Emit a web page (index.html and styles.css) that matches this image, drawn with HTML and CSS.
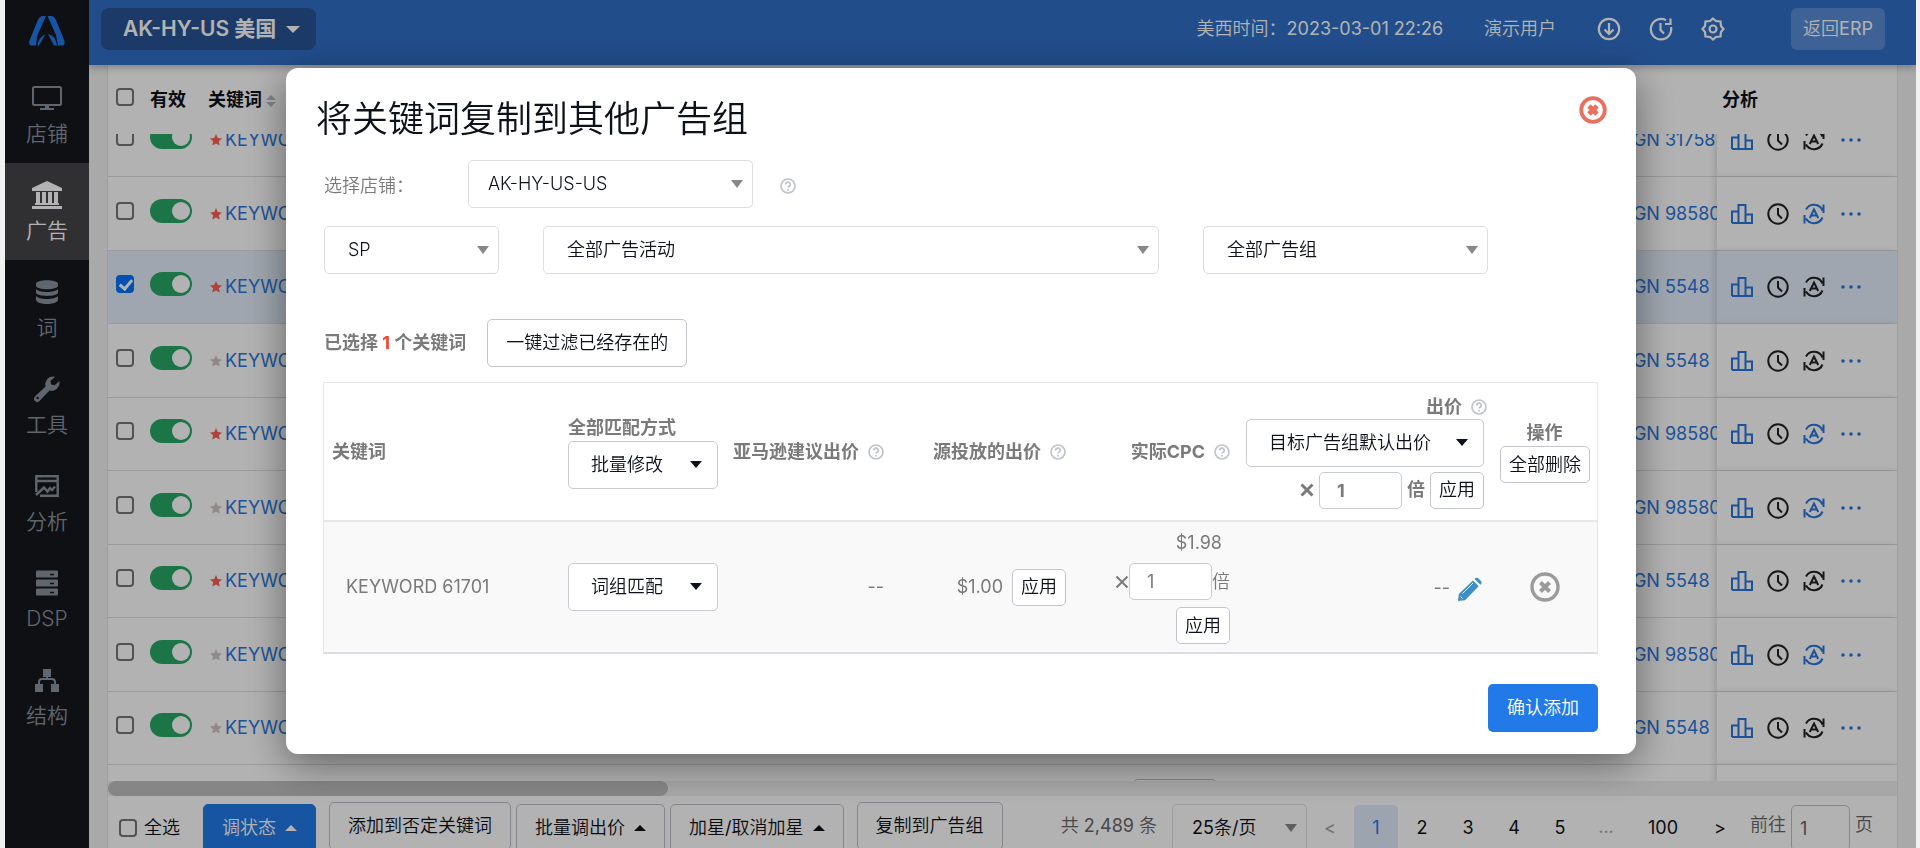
FILE: index.html
```html
<!DOCTYPE html>
<html lang="zh-CN">
<head>
<meta charset="utf-8">
<title>广告 - 关键词</title>
<link rel="stylesheet" href="styles.css">
</head>
<body>
<svg class="sprite" aria-hidden="true">
  <symbol id="i-help" viewBox="0 0 16 16"><circle cx="8" cy="8" r="7" fill="none" stroke="currentColor" stroke-width="1.7"/><path d="M5.8 6.4a2.2 2.2 0 1 1 3.1 2c-.6.3-.9.6-.9 1.2" fill="none" stroke="currentColor" stroke-width="1.7"/><circle cx="8" cy="11.7" r="1" fill="currentColor"/></symbol>
  <symbol id="i-star" viewBox="0 0 12 12"><path d="M6 0l1.8 3.9 4.2.5-3.1 2.9.8 4.2L6 9.4l-3.7 2.1.8-4.2L0 4.4l4.2-.5z" fill="currentColor"/></symbol>
  <symbol id="i-bars" viewBox="0 0 22 20"><path d="M1 19V7.500h6.500V19M7.500 19V1h7v18M14.500 10.500H21V19H1" fill="none" stroke="currentColor" stroke-width="2"/></symbol>
  <symbol id="i-clock" viewBox="0 0 22 22"><circle cx="11" cy="11" r="9.700" fill="none" stroke="currentColor" stroke-width="2"/><path d="M11 5v6.500l4 4" fill="none" stroke="currentColor" stroke-width="2"/></symbol>
  <symbol id="i-auto" viewBox="0 0 22 22"><path d="M3 6.500A9.200 9.200 0 0 1 19.500 7.500M20.500 1.500V10M19.500 14.500A9.200 9.200 0 0 1 3 15.500M1.500 20.500V12M6.800 15L11 6.500l4.200 8.500M8.500 12.500h5" fill="none" stroke="currentColor" stroke-width="2"/></symbol>
  <symbol id="i-more" viewBox="0 0 20 4"><circle cx="2" cy="2" r="1.800" fill="currentColor"/><circle cx="10" cy="2" r="1.800" fill="currentColor"/><circle cx="18" cy="2" r="1.800" fill="currentColor"/></symbol>
</svg>

<div class="app">
  <nav class="side">
    <a class="logo" href="#" aria-label="首页"><svg width="36" height="32" viewBox="0 0 36 32"><path d="M13 1h4L8.500 20 7 30.500H2Q-.5 30 .3 26L8.500 6q1.500-4 4.500-5zM18.500 1H23q3 1 4 4l8.500 21q.5 4-1.500 4.500h-5L27 20z" fill="#217ae8"/><path d="M8.500 30.500q1-8 8-11.500l-6.500 11.500zM19 19q8 2 9 11.500h-3z" fill="#217ae8"/></svg></a>
    <a class="nav" href="#"><svg width="30" height="24" viewBox="0 0 30 24"><rect x="1" y="1" width="28" height="18" rx="1.500" fill="none" stroke="currentColor" stroke-width="2"/><path d="M13 19h4v3h5v2H8v-2h5z" fill="currentColor"/></svg><span>店铺</span></a>
    <a class="nav nav--on" href="#"><svg width="30" height="28" viewBox="0 0 30 28"><path d="M15 0l15 7v3H0V7zM4 11h4v11H4zM10 11h4v11h-4zM16 11h4v11h-4zM22 11h4v11h-4zM3 22h24v2H3zM0 25h30v3H0z" fill="currentColor"/></svg><span>广告</span></a>
    <a class="nav" href="#"><svg width="22" height="24" viewBox="0 0 22 24"><path d="M0 4c0-5 22-5 22 0v1.500c0 5-22 5-22 0zM0 9c3 4 19 4 22 0v3.500c0 4.500-22 4.500-22 0zM0 16c3 4 19 4 22 0v3.500c0 6-22 6-22 0z" fill="currentColor"/></svg><span>词</span></a>
    <a class="nav" href="#"><svg width="26" height="26" viewBox="0 0 26 26"><path d="M21 .7a8 8 0 0 0-9.500 9.800L1 20.500a2.800 2.800 0 0 0 4.500 4.500L15.500 14.500A8 8 0 0 0 25.300 5l-4.500 4.300-3.600-.7-.8-3.700z" fill="currentColor"/><circle cx="3.700" cy="22" r="1.200" fill="#15181e"/></svg><span>工具</span></a>
    <a class="nav" href="#"><svg width="24" height="22" viewBox="0 0 24 22"><path d="M1.300 17V1.200h21.400v19.600H5M1 6h22" fill="none" stroke="currentColor" stroke-width="2.400"/><path d="M1 20l8-7.500 3.500 4L15 13l2 2 3-3.500" fill="none" stroke="currentColor" stroke-width="2.400"/><path d="M3 3.300h2M7 3.300h12" stroke="#15181e"/></svg><span>分析</span></a>
    <a class="nav" href="#"><svg width="22" height="25" viewBox="0 0 22 25"><rect width="22" height="7" rx="1" fill="currentColor"/><rect y="9" width="22" height="7" rx="1" fill="currentColor"/><rect y="18" width="22" height="7" rx="1" fill="currentColor"/><path d="M14 4h4M14 13h4M14 22h4" stroke="#15181e" stroke-width="1.500"/></svg><span>DSP</span></a>
    <a class="nav" href="#"><svg width="24" height="24" viewBox="0 0 24 24"><path d="M8 1h8v8h-8zM0 16h8v8H0zM16 16h8v8h-8z" fill="currentColor"/><path d="M12 8v4M4 17v-3q0-3 3-3h10q3 0 3 3v3" fill="none" stroke="currentColor" stroke-width="2"/></svg><span>结构</span></a>
  </nav>

  <div class="page">
    <header class="top">
      <button class="store" type="button">AK-HY-US 美国<i class="tri tri--down"></i></button>
      <span class="time">美西时间：2023-03-01 22:26</span>
      <a class="user" href="#">演示用户</a>
      <button class="ico" type="button" aria-label="下载"><svg width="24" height="24" viewBox="0 0 24 24" fill="none" stroke="currentColor" stroke-width="2.200"><circle cx="12" cy="12" r="10.200"/><path d="M12 6v10.500M7.500 12.500l4.500 4.500 4.500-4.500"/></svg></button>
      <button class="ico" type="button" aria-label="历史"><svg width="24" height="24" viewBox="0 0 24 24" fill="none" stroke="currentColor" stroke-width="2.200"><path d="M17 3.300A10.200 10.200 0 1 0 22 10M21.500 1.500V7H16M11.500 6v7l3.500 3.500"/></svg></button>
      <button class="ico" type="button" aria-label="设置"><svg width="24" height="24" viewBox="0 0 24 24" fill="none" stroke="currentColor" stroke-width="2.200"><path d="M12 1.500l3 2.500 4.500.5.500 4.500 2.500 3-2.500 3-.5 4.500-4.500.5-3 2.500-3-2.500-4.500-.5L4 15l-2.500-3L4 9l.5-4.500L9 4z"/><circle cx="12" cy="12" r="3.500"/></svg></button>
      <button class="erp" type="button">返回ERP</button>
    </header>

    <main class="list">
      <table class="grid grid--head">
        <colgroup><col class="w-check"><col class="w-on"><col class="w-key"><col><col class="w-bid"><col class="w-gap"><col class="w-camp"><col class="w-act"></colgroup>
        <tr><th class="up"><input type="checkbox" aria-label="选择本页"></th><th>有效</th><th>关键词<span class="sort"><i class="tri"></i><i class="tri tri--down"></i></span></th><th></th><th></th><th></th><th></th><th class="ana">分析</th></tr>
      </table>
      <div class="scroll">
      <table class="grid grid--body">
        <colgroup><col class="w-check"><col class="w-on"><col class="w-key"><col><col class="w-bid"><col class="w-gap"><col class="w-camp"><col class="w-act"></colgroup>
        <tr><td class="up"><input type="checkbox" aria-label="选择"></td><td class="up"><input class="switch" type="checkbox" checked aria-label="有效"></td><td class="key"><svg class="star star--on"><use href="#i-star"/></svg><a href="#">KEYWORD 31758</a></td><td></td><td></td><td></td><td><a href="#">CAMPAIGN 31758</a></td><td class="act"><div><svg class="bars"><use href="#i-bars"/></svg><svg class="rnd"><use href="#i-clock"/></svg><svg class="rnd"><use href="#i-auto"/></svg><svg class="more"><use href="#i-more"/></svg></div></td></tr>
        <tr><td class="up"><input type="checkbox" aria-label="选择"></td><td class="up"><input class="switch" type="checkbox" checked aria-label="有效"></td><td class="key"><svg class="star star--on"><use href="#i-star"/></svg><a href="#">KEYWORD 98580</a></td><td></td><td></td><td></td><td><a href="#">CAMPAIGN 98580</a></td><td class="act"><div><svg class="bars"><use href="#i-bars"/></svg><svg class="rnd"><use href="#i-clock"/></svg><svg class="rnd rnd--on"><use href="#i-auto"/></svg><svg class="more"><use href="#i-more"/></svg></div></td></tr>
        <tr class="sel"><td class="up"><input type="checkbox" checked aria-label="选择"></td><td class="up"><input class="switch" type="checkbox" checked aria-label="有效"></td><td class="key"><svg class="star star--on"><use href="#i-star"/></svg><a href="#">KEYWORD 61701</a></td><td></td><td></td><td></td><td><a href="#">CAMPAIGN 5548</a></td><td class="act"><div><svg class="bars"><use href="#i-bars"/></svg><svg class="rnd"><use href="#i-clock"/></svg><svg class="rnd"><use href="#i-auto"/></svg><svg class="more"><use href="#i-more"/></svg></div></td></tr>
        <tr><td class="up"><input type="checkbox" aria-label="选择"></td><td class="up"><input class="switch" type="checkbox" checked aria-label="有效"></td><td class="key"><svg class="star"><use href="#i-star"/></svg><a href="#">KEYWORD 5548</a></td><td></td><td></td><td></td><td><a href="#">CAMPAIGN 5548</a></td><td class="act"><div><svg class="bars"><use href="#i-bars"/></svg><svg class="rnd"><use href="#i-clock"/></svg><svg class="rnd"><use href="#i-auto"/></svg><svg class="more"><use href="#i-more"/></svg></div></td></tr>
        <tr><td class="up"><input type="checkbox" aria-label="选择"></td><td class="up"><input class="switch" type="checkbox" checked aria-label="有效"></td><td class="key"><svg class="star star--on"><use href="#i-star"/></svg><a href="#">KEYWORD 98580</a></td><td></td><td></td><td></td><td><a href="#">CAMPAIGN 98580</a></td><td class="act"><div><svg class="bars"><use href="#i-bars"/></svg><svg class="rnd"><use href="#i-clock"/></svg><svg class="rnd rnd--on"><use href="#i-auto"/></svg><svg class="more"><use href="#i-more"/></svg></div></td></tr>
        <tr><td class="up"><input type="checkbox" aria-label="选择"></td><td class="up"><input class="switch" type="checkbox" checked aria-label="有效"></td><td class="key"><svg class="star"><use href="#i-star"/></svg><a href="#">KEYWORD 98580</a></td><td></td><td></td><td></td><td><a href="#">CAMPAIGN 98580</a></td><td class="act"><div><svg class="bars"><use href="#i-bars"/></svg><svg class="rnd"><use href="#i-clock"/></svg><svg class="rnd rnd--on"><use href="#i-auto"/></svg><svg class="more"><use href="#i-more"/></svg></div></td></tr>
        <tr><td class="up"><input type="checkbox" aria-label="选择"></td><td class="up"><input class="switch" type="checkbox" checked aria-label="有效"></td><td class="key"><svg class="star star--on"><use href="#i-star"/></svg><a href="#">KEYWORD 5548</a></td><td></td><td></td><td></td><td><a href="#">CAMPAIGN 5548</a></td><td class="act"><div><svg class="bars"><use href="#i-bars"/></svg><svg class="rnd"><use href="#i-clock"/></svg><svg class="rnd"><use href="#i-auto"/></svg><svg class="more"><use href="#i-more"/></svg></div></td></tr>
        <tr><td class="up"><input type="checkbox" aria-label="选择"></td><td class="up"><input class="switch" type="checkbox" checked aria-label="有效"></td><td class="key"><svg class="star"><use href="#i-star"/></svg><a href="#">KEYWORD 98580</a></td><td></td><td></td><td></td><td><a href="#">CAMPAIGN 98580</a></td><td class="act"><div><svg class="bars"><use href="#i-bars"/></svg><svg class="rnd"><use href="#i-clock"/></svg><svg class="rnd rnd--on"><use href="#i-auto"/></svg><svg class="more"><use href="#i-more"/></svg></div></td></tr>
        <tr><td class="up"><input type="checkbox" aria-label="选择"></td><td class="up"><input class="switch" type="checkbox" checked aria-label="有效"></td><td class="key"><svg class="star"><use href="#i-star"/></svg><a href="#">KEYWORD 5548</a></td><td></td><td></td><td></td><td><a href="#">CAMPAIGN 5548</a></td><td class="act"><div><svg class="bars"><use href="#i-bars"/></svg><svg class="rnd"><use href="#i-clock"/></svg><svg class="rnd"><use href="#i-auto"/></svg><svg class="more"><use href="#i-more"/></svg></div></td></tr>
        <tr><td></td><td></td><td></td><td></td><td><input class="bid" type="text" aria-label="出价"></td><td></td><td></td><td class="act"></td></tr>
      </table>
      </div>
      <div class="hbar"><div class="hbar-thumb"></div></div>
      <footer class="foot">
        <label class="all"><input type="checkbox">全选</label>
        <button class="tool tool--menu tool--blue" type="button">调状态<i class="tri"></i></button>
        <button class="tool" type="button">添加到否定关键词</button>
        <button class="tool tool--menu" type="button">批量调出价<i class="tri"></i></button>
        <button class="tool tool--menu" type="button">加星/取消加星<i class="tri"></i></button>
        <button class="tool tool--copy" type="button">复制到广告组</button>
        <span class="total">共 2,489 条</span>
        <span class="pick pick--size"><select aria-label="每页条数"><option>25条/页</option></select></span>
        <button class="pg pg--off" type="button">&lt;</button>
        <button class="pg pg--on" type="button">1</button>
        <button class="pg" type="button">2</button>
        <button class="pg" type="button">3</button>
        <button class="pg" type="button">4</button>
        <button class="pg" type="button">5</button>
        <span class="pg pg--off">...</span>
        <button class="pg pg--wide" type="button">100</button>
        <button class="pg" type="button">&gt;</button>
        <label class="jump">前往<input type="text" value="1">页</label>
      </footer>
    </main>
  </div>
</div>

<div class="mask">
  <section class="modal" role="dialog" aria-labelledby="dlg-title">
    <div class="modal-head">
      <h1 id="dlg-title">将关键词复制到其他广告组</h1>
      <button class="close" type="button" aria-label="关闭"><svg width="28" height="28" viewBox="0 0 28 28"><circle cx="14" cy="14" r="11.800" fill="none" stroke="#e8705f" stroke-width="3.800"/><path d="M10 10l8 8M18 10l-8 8" stroke="#e8705f" stroke-width="5"/></svg></button>
    </div>
    <div class="modal-body">
      <div class="line">
        <label class="lbl" for="shop">选择店铺：</label>
        <span class="pick pick--shop"><select id="shop"><option>AK-HY-US-US</option></select></span>
        <svg class="help"><use href="#i-help"/></svg>
      </div>
      <div class="line line--filters">
        <span class="pick pick--type"><select aria-label="广告类型"><option>SP</option></select></span>
        <span class="pick pick--camp"><select aria-label="广告活动"><option>全部广告活动</option></select></span>
        <span class="pick pick--group"><select aria-label="广告组"><option>全部广告组</option></select></span>
      </div>
      <div class="line line--count">
        <strong>已选择 <em>1</em> 个关键词</strong>
        <button class="btn btn--lg" type="button">一键过滤已经存在的</button>
      </div>
      <table class="kw">
        <colgroup><col class="k1"><col class="k2"><col class="k3"><col class="k4"><col class="k5"><col class="k6"><col class="k7"></colgroup>
        <thead>
          <tr>
            <th>关键词</th>
            <th>全部匹配方式<span class="pick pick--dark pick--match"><select aria-label="全部匹配方式"><option>批量修改</option></select></span></th>
            <th class="r"><span class="q">亚马逊建议出价<svg class="help"><use href="#i-help"/></svg></span></th>
            <th class="r"><span class="q">源投放的出价<svg class="help"><use href="#i-help"/></svg></span></th>
            <th class="r"><span class="q">实际CPC<svg class="help"><use href="#i-help"/></svg></span></th>
            <th class="r"><div class="q q--bid">出价<svg class="help"><use href="#i-help"/></svg></div>
              <div class="pick pick--dark pick--bid"><select aria-label="出价"><option>目标广告组默认出价</option></select></div>
              <div class="mult mult--gap"><svg class="x" viewBox="0 0 14 14"><path d="M1.500 1.500l11 11M12.500 1.500l-11 11"/></svg><input type="text" value="1" aria-label="倍数"><span>倍</span><button class="btn" type="button">应用</button></div></th>
            <th class="c">操作<br><button class="btn" type="button">全部删除</button></th>
          </tr>
        </thead>
        <tbody>
          <tr>
            <td class="name">KEYWORD 61701</td>
            <td><span class="pick pick--dark pick--match"><select aria-label="匹配方式"><option>词组匹配</option></select></span></td>
            <td class="r">--</td>
            <td class="r"><div class="mult mult--src"><span>$1.00</span><button class="btn" type="button">应用</button></div></td>
            <td class="r"><div class="cpc"><span class="price">$1.98</span><div class="mult"><svg class="x" viewBox="0 0 14 14"><path d="M1.500 1.500l11 11M12.500 1.500l-11 11"/></svg><input type="text" value="1" aria-label="倍数"><span>倍</span></div><button class="btn" type="button">应用</button></div></td>
            <td class="r"><span class="edit">--<button type="button" aria-label="编辑"><svg width="24" height="24" viewBox="0 0 24 24"><path d="M15 3.500l5.700 5.700L7 23.200 0 24l.8-7zM16.500 2q1.700-2 3.500-1l3 3q1.500 1.700-.5 3.800z" fill="#3d8fc6"/><path d="M4.500 16.500L15 6M2.500 19.500l2 2" stroke="#fff"/></svg></button></span></td>
            <td class="c"><button class="del" type="button" aria-label="删除"><svg width="30" height="30" viewBox="0 0 30 30"><circle cx="15" cy="15" r="13" fill="none" stroke="#9b9b9b" stroke-width="3.400"/><path d="M10.500 10.500l9 9M19.500 10.500l-9 9" stroke="#9b9b9b" stroke-width="4"/></svg></button></td>
          </tr>
        </tbody>
      </table>
      <div class="done"><button class="ok" type="button">确认添加</button></div>
    </div>
  </section>
</div>
</body>
</html>
```
FILE: styles.css
```css
* { box-sizing: border-box; }
body {
  margin: 0;
  height: 100vh;
  overflow: hidden;
  background: #f1f1f1;
  color: #0d1119;
  font: 400 18px/26px Inter, "Noto Sans CJK SC DemiLight", "Noto Sans CJK SC Light", "Noto Sans CJK SC", sans-serif;
}
button, input, select { font: inherit; color: inherit; margin: 0; }
button { padding: 0; border: 0; background: none; white-space: nowrap; cursor: pointer; }
a { color: #2a76dc; text-decoration: none; }
th, strong, .store { font-family: Inter, "Noto Sans CJK SC", sans-serif; }
.sprite { display: none; }

.tri { display: inline-block; border: 6px solid transparent; border-top: 0; border-bottom: 6px solid currentColor; }
.tri--down { border-top: 6px solid currentColor; border-bottom: 0; }

.app { display: flex; height: 100vh; margin: 0 4px 0 5px; overflow: hidden; }

/* sidebar */
.side { flex: 0 0 84px; background: #15181e; }
.logo { display: flex; justify-content: center; height: 66px; padding: 15px 0 0; }
.nav {
  display: flex; flex-direction: column; align-items: center; gap: 6px;
  height: 97px; padding-top: 18px;
  color: #8a929c; font-size: 21px; line-height: 32px; font-weight: 300;
}
.nav svg { height: 28px; }
.nav--on { background: #454649; color: #fff; }

/* top bar */
.page { flex: 1; min-width: 0; display: flex; flex-direction: column; background: #f2f2f2; }
.top {
  position: relative; z-index: 2;
  display: flex; align-items: center; flex: 0 0 65px;
  padding: 0 31px 7px 12px;
  background: #306fc7; color: #fff;
  box-shadow: 0 2px 8px rgba(0, 0, 0, .3);
}
.store {
  display: flex; align-items: center; gap: 10px;
  height: 42px; margin-right: auto; padding: 0 16px 0 22px;
  border-radius: 8px; background: #285496;
  font-size: 21px; font-weight: 600;
}
.store .tri { border-width: 7px; border-bottom: 0; }
.time { margin-right: 41px; }
.user { margin-right: 41px; color: #fff; }
.ico { display: flex; margin-right: 28px; }
.erp { height: 42px; margin-left: 38px; padding: 0 12px; border-radius: 6px; background: #5a8dd6; }

/* keyword list */
.list {
  flex: 1; min-height: 0; display: flex; flex-direction: column;
  margin: 0 18px; border: 1px solid #e2e2e2; border-width: 0 1px; background: #fff;
}
.grid { width: 100%; table-layout: fixed; border-spacing: 0; }
.grid th, .grid td { padding: 0; text-align: left; white-space: nowrap; }
.grid td { overflow: hidden; border-bottom: 1px solid #dedede; }
.grid--head { flex: none; }
.grid--head th { height: 69px; font-weight: 700; }
.grid .up { padding-bottom: 6px; }
.grid input[type="checkbox"] { display: block; }
.grid--body tr { height: 74px; }
.grid--body tr:nth-child(odd) { height: 73px; }
.w-check { width: 42px; }
.w-on { width: 58px; }
.w-key { width: 182px; }
.w-bid { width: 84px; }
.w-gap { width: 347px; }
.w-camp { width: 153px; }
.w-act { width: 180px; }
.grid .up:first-child { padding-left: 8px; }
.grid .key { padding-left: 2px; }
.grid .ana { padding-left: 5px; }
.sort { display: inline-flex; flex-direction: column; gap: 2px; margin-left: 4px; vertical-align: middle; color: #b8bcc4; }
.sort .tri { border-left-width: 5px; border-right-width: 5px; border-bottom-width: 5px; }
.sort .tri--down { border-top-width: 5px; border-bottom-width: 0; }
.scroll { flex: 1; min-height: 0; overflow: hidden; }
.grid--body { margin-top: -30px; }
.sel td { background: #e4eefb; }
.grid .act { position: relative; z-index: 1; padding-left: 14px; background: #fff; box-shadow: -3px 0 6px rgba(0, 0, 0, .12); }
.grid .sel .act { background: #e4eefb; }
.act div { display: flex; align-items: center; gap: 14px; color: #2a76dc; }
.act .bars { width: 22px; height: 20px; }
.act .rnd { width: 22px; height: 22px; color: #222; }
.act .rnd--on { color: #2a76dc; }
.act .more { width: 20px; height: 4px; margin-left: 2px; }
.star { width: 12px; height: 12px; margin-right: 3px; color: #cdc4c2; }
.star--on { color: #fb5f55; }
.bid { display: block; width: 84px; height: 46px; border: 1px solid #b9bcc2; border-radius: 5px; }

input[type="checkbox"] {
  appearance: none; flex: none; width: 18px; height: 18px;
  border: 2px solid #767676; border-radius: 4px; background: #fff;
}
input[type="checkbox"]:checked { border-color: #0075ff; background: #0075ff; }
input[type="checkbox"]:not(.switch):checked::after {
  content: ""; display: block; width: 5px; height: 10px; margin: 0 0 0 4px;
  border: solid #fff; border-width: 0 3px 3px 0; transform: rotate(40deg);
}
input.switch[type="checkbox"] { width: 42px; height: 24px; padding: 3px 2px; border: 0; border-radius: 12px; background: #29a865; }
input.switch::after { content: ""; display: block; width: 18px; height: 18px; margin-left: 20px; border-radius: 50%; background: #fff; }

.hbar { flex: 0 0 15px; background: #f0f0f0; }
.hbar-thumb { width: 560px; height: 15px; border-radius: 8px; background: #c1c1c1; }

/* bottom tools */
.foot {
  display: flex; align-items: flex-start; flex: 0 0 52px; height: 52px;
  padding: 6px 24px 0 11px; overflow: hidden; white-space: nowrap;
}
.all { display: flex; align-items: center; gap: 7px; height: 52px; margin-right: 23px; }
.tool { flex: none; height: 48px; margin-right: 5px; padding: 0 18px; border: 1px solid #bfc2c9; border-radius: 5px; background: #fff; }
.tool--menu { display: flex; align-items: center; gap: 9px; margin-top: 2px; }
.foot .tool--blue { margin-right: 13px; border-color: #217ae8; background: #217ae8; color: #fff; }
.foot .tool--copy { margin-left: 8px; margin-right: auto; }
.total { margin: 11px 15px 0 0; color: #666; }
.foot .pick--size { width: 135px; margin-top: 2px; }
.pg { flex: none; width: 46px; height: 48px; margin-top: 2px; line-height: 46px; text-align: center; }
.pg--on { border: 1px solid transparent; background: #e0ebfb; background-clip: padding-box; border-radius: 6px; color: #217ae8; }
.pg--off { color: #a0a0a0; }
.pg--wide { width: 68px; }
.jump { display: flex; align-items: center; gap: 5px; height: 46px; margin-left: 7px; color: #666; }
.jump input { width: 59px; height: 46px; margin-top: 6px; padding: 0 8px; border: 1px solid #bfc2c9; border-radius: 5px; background: #fff; }

/* selects */
.pick { position: relative; display: block; flex: none; }
.pick select {
  appearance: none; display: block; width: 100%; height: 48px; padding: 0 30px 0 23px;
  border: 1px solid #dcdee2; border-radius: 5px; background: #fff; color: #0d1119;
}
.pick::after {
  content: ""; position: absolute; right: 10px; top: 20px;
  border: 6px solid transparent; border-top: 8px solid #888; border-bottom: 0; pointer-events: none;
}
.pick.pick--size select { padding-left: 19px; }
.pick.pick--dark select { padding-left: 22px; border-color: #c8cbd0; }
.pick--dark::after { right: 16px; border-top: 7px solid #0d1119; }
.pick.pick--shop select { padding-left: 19px; }
.pick--shop { width: 285px; }
.pick--type { width: 175px; }
.pick--camp { flex: 1; }
.pick--group { width: 285px; }
.pick--match { width: 150px; }
.pick--bid { margin-bottom: 5px; }

/* dialog */
.mask { position: fixed; inset: 0 4px 0 5px; z-index: 10; padding: 68px 280px 0 281px; background: rgba(0, 0, 0, .3); }
.modal { padding: 22px 38px; border-radius: 12px; background: #fff; color: #7a7a7a; box-shadow: 0 10px 40px rgba(0, 0, 0, .45); }
.modal select, .modal .btn {
  font-family: Inter, "Noto Sans CJK SC DemiLight", "Noto Sans CJK SC Light", "Noto Sans CJK SC", sans-serif;
  font-weight: 300;
}
.modal-head { display: flex; justify-content: space-between; margin: 0 -9px 12px -8px; }
.modal-head h1 { margin: 0; color: #0d1119; font-size: 36px; line-height: 58px; font-weight: 400; }
.close { display: flex; align-self: flex-start; margin-top: 6px; }
.line { display: flex; align-items: center; margin-bottom: 18px; }
.lbl { width: 144px; padding-top: 3px; font-weight: 300; }
.help { flex: none; width: 16px; height: 16px; color: #c0c4cc; }
.pick--shop + .help { margin: 3px 0 0 27px; }
.line--filters { gap: 44px; margin: 0 110px 45px 0; }
.line--count { gap: 21px; margin-bottom: 15px; }
.line--count strong { font-weight: 700; }
.line em { color: #f5432f; font-style: normal; }
.btn { height: 37px; padding: 0 8px; border: 1px solid #c3c5ca; border-radius: 5px; background: #fff; color: #0d1119; }
.btn--lg { height: 48px; padding: 0 18px; }

.kw { width: calc(100% + 1px); margin-left: -1px; table-layout: fixed; border-spacing: 0; border: 1px solid #e6e7eb; border-bottom: 2px solid #dcdee3; }
.k1 { width: 236px; }
.k2 { width: 164px; }
.k3 { width: 168px; }
.k4 { width: 182px; }
.k5 { width: 164px; }
.k7 { width: 105px; }
.kw th, .kw td { padding: 8px; text-align: left; white-space: nowrap; }
.kw th { height: 139px; border-bottom: 2px solid #e6e7eb; font-weight: 700; }
.kw td { height: 130px; background: #f9f9f9; }
.kw .r { text-align: right; }
.kw .c { text-align: center; }
.kw .name { padding-left: 22px; }
.q { display: inline-flex; align-items: center; gap: 9px; }
.q--bid { display: flex; justify-content: flex-end; margin-right: -3px; line-height: 24px; }
.mult { display: flex; align-items: center; justify-content: flex-end; }
.mult--gap { gap: 5px; }
.mult--src { gap: 9px; }
.mult input { width: 83px; height: 37px; padding: 0 17px; border: 1px solid #c8cbd0; border-radius: 5px; background: #fff; }
.x { width: 14px; height: 14px; fill: none; stroke: #7a7a7a; stroke-width: 2; }
th .x { stroke-width: 3; }
.cpc { display: flex; flex-direction: column; align-items: flex-end; gap: 7px; }
.cpc .price { padding-right: 8px; }
.edit { display: inline-flex; align-items: flex-end; gap: 8px; padding-right: 2px; vertical-align: middle; }
.edit button, .del { display: inline-flex; vertical-align: middle; }
.done { display: flex; justify-content: flex-end; margin-top: 30px; }
.ok { height: 48px; padding: 0 19px; border-radius: 5px; background: #217ae8; color: #fff; }
```
